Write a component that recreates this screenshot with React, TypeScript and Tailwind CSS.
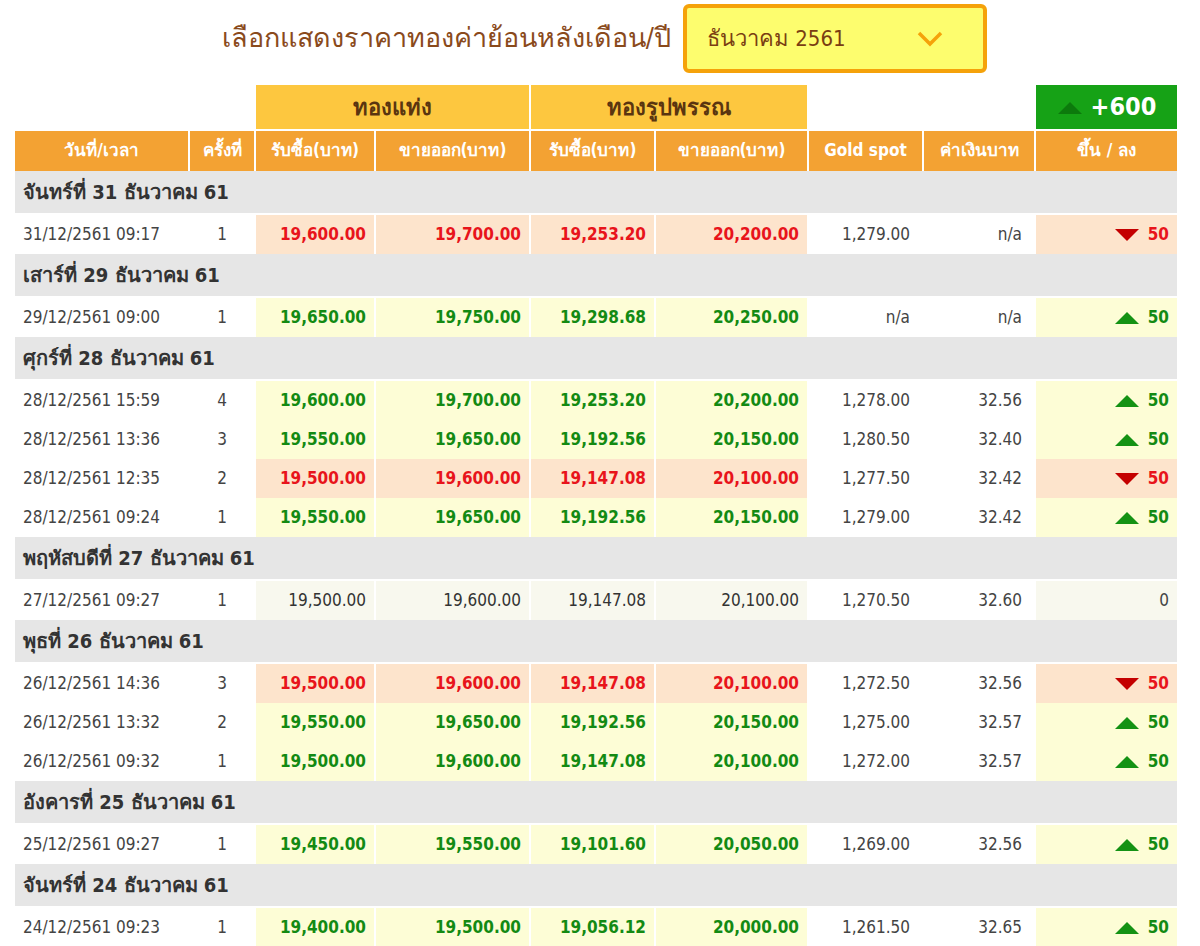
import React from 'react';

type Row = { t: string; n: number; v: string[]; spot: string; fx: string; dir: 'up' | 'down' | 'eq' };
type Day = { label: string; rows: Row[] };

const days: Day[] = [
  { label: 'จันทร์ที่ 31 ธันวาคม 61', rows: [
    { t: '31/12/2561 09:17', n: 1, v: ['19,600.00', '19,700.00', '19,253.20', '20,200.00'], spot: '1,279.00', fx: 'n/a', dir: 'down' },
  ] },
  { label: 'เสาร์ที่ 29 ธันวาคม 61', rows: [
    { t: '29/12/2561 09:00', n: 1, v: ['19,650.00', '19,750.00', '19,298.68', '20,250.00'], spot: 'n/a', fx: 'n/a', dir: 'up' },
  ] },
  { label: 'ศุกร์ที่ 28 ธันวาคม 61', rows: [
    { t: '28/12/2561 15:59', n: 4, v: ['19,600.00', '19,700.00', '19,253.20', '20,200.00'], spot: '1,278.00', fx: '32.56', dir: 'up' },
    { t: '28/12/2561 13:36', n: 3, v: ['19,550.00', '19,650.00', '19,192.56', '20,150.00'], spot: '1,280.50', fx: '32.40', dir: 'up' },
    { t: '28/12/2561 12:35', n: 2, v: ['19,500.00', '19,600.00', '19,147.08', '20,100.00'], spot: '1,277.50', fx: '32.42', dir: 'down' },
    { t: '28/12/2561 09:24', n: 1, v: ['19,550.00', '19,650.00', '19,192.56', '20,150.00'], spot: '1,279.00', fx: '32.42', dir: 'up' },
  ] },
  { label: 'พฤหัสบดีที่ 27 ธันวาคม 61', rows: [
    { t: '27/12/2561 09:27', n: 1, v: ['19,500.00', '19,600.00', '19,147.08', '20,100.00'], spot: '1,270.50', fx: '32.60', dir: 'eq' },
  ] },
  { label: 'พุธที่ 26 ธันวาคม 61', rows: [
    { t: '26/12/2561 14:36', n: 3, v: ['19,500.00', '19,600.00', '19,147.08', '20,100.00'], spot: '1,272.50', fx: '32.56', dir: 'down' },
    { t: '26/12/2561 13:32', n: 2, v: ['19,550.00', '19,650.00', '19,192.56', '20,150.00'], spot: '1,275.00', fx: '32.57', dir: 'up' },
    { t: '26/12/2561 09:32', n: 1, v: ['19,500.00', '19,600.00', '19,147.08', '20,100.00'], spot: '1,272.00', fx: '32.57', dir: 'up' },
  ] },
  { label: 'อังคารที่ 25 ธันวาคม 61', rows: [
    { t: '25/12/2561 09:27', n: 1, v: ['19,450.00', '19,550.00', '19,101.60', '20,050.00'], spot: '1,269.00', fx: '32.56', dir: 'up' },
  ] },
  { label: 'จันทร์ที่ 24 ธันวาคม 61', rows: [
    { t: '24/12/2561 09:23', n: 1, v: ['19,400.00', '19,500.00', '19,056.12', '20,000.00'], spot: '1,261.50', fx: '32.65', dir: 'up' },
  ] },
];

const widths = ['w-[173px]', 'w-[64px]', 'w-[118px]', 'w-[153px]', 'w-[123px]', 'w-[151px]', 'w-[113px]', 'w-[110px]', 'w-[141px]'];

const Tri: React.FC<{ up: boolean; cls: string }> = ({ up, cls }) => (
  <svg width="26" height="14" viewBox="0 0 26 14" className={`inline-block mr-2 ${cls}`}>
    <path d={up ? 'M13 1 L25 13 L1 13 Z' : 'M1 1 L25 1 L13 13 Z'} fill="currentColor" />
  </svg>
);

const DataRow: React.FC<{ r: Row }> = ({ r }) => {
  const bg = r.dir === 'down' ? 'bg-[#fde4cc]' : r.dir === 'up' ? 'bg-[#fdfdd6]' : 'bg-[#f8f8ee]';
  const tc = r.dir === 'down' ? 'text-[#e8141b] font-bold' : r.dir === 'up' ? 'text-[#138a13] font-bold' : 'text-[#333]';
  return (
    <tr className="h-[39px] text-[17px] text-[#444]">
      <td className="pl-2 bg-white">{r.t}</td>
      <td className="text-center bg-white">{r.n}</td>
      {r.v.map((x, i) => (
        <td key={i} className={`text-right pr-2 ${bg} ${tc}`}>{x}</td>
      ))}
      <td className="text-right pr-3 bg-white">{r.spot}</td>
      <td className="text-right pr-3 bg-white">{r.fx}</td>
      <td className={`text-right pr-2 ${bg}`}>
        {r.dir === 'eq' ? <span>0</span> : (
          <span className={r.dir === 'up' ? 'text-[#138a13] font-bold' : 'text-[#e8141b] font-bold'}>
            <Tri up={r.dir === 'up'} cls={r.dir === 'up' ? 'text-[#149214]' : 'text-[#c40000]'} />50
          </span>
        )}
      </td>
    </tr>
  );
};

export default function App() {
  return (
    <div className="w-[1200px] h-[946px] bg-white overflow-hidden" style={{ fontFamily: '"DejaVu Sans Condensed", "Liberation Sans", "Noto Sans", sans-serif' }}>
      <div className="flex items-center justify-end pr-[213px] pt-[4px] gap-3">
        <span className="text-[27px] text-[#8a4a1c]">เลือกแสดงราคาทองค่าย้อนหลังเดือน/ปี</span>
        <div className="w-[304px] h-[69px] border-[4px] border-[#f5a20a] rounded-md bg-[#fdfd6e] flex items-center justify-between pl-5 pr-10">
          <span className="text-[22px] text-[#7a3e12]">ธันวาคม 2561</span>
          <svg width="26" height="16" viewBox="0 0 26 16"><path d="M2 2 L13 13 L24 2" fill="none" stroke="#f5a20a" strokeWidth="3.5" /></svg>
        </div>
      </div>
      <table className="ml-[13px] mt-[12px] border-separate border-spacing-x-[2px] border-spacing-y-0 table-fixed">
        <colgroup>{widths.map((w, i) => <col key={i} className={w} />)}</colgroup>
        <thead>
          <tr className="h-[44px]">
            <th colSpan={2}></th>
            <th colSpan={2} className="bg-[#fdc73f] text-[#5a3510] text-[22px] font-bold">ทองแท่ง</th>
            <th colSpan={2} className="bg-[#fdc73f] text-[#5a3510] text-[22px] font-bold">ทองรูปพรรณ</th>
            <th colSpan={2}></th>
            <th className="bg-[#16a216] text-white text-[25px] font-bold">
              <Tri up cls="text-[#0c7a0c]" />+600
            </th>
          </tr>
          <tr className="h-[42px] bg-[#f3a233] text-white text-[17px] font-bold">
            <th className="border-t-2 border-white">วันที่/เวลา</th>
            <th className="border-t-2 border-white">ครั้งที่</th>
            <th className="border-t-2 border-white">รับซื้อ(บาท)</th>
            <th className="border-t-2 border-white">ขายออก(บาท)</th>
            <th className="border-t-2 border-white">รับซื้อ(บาท)</th>
            <th className="border-t-2 border-white">ขายออก(บาท)</th>
            <th className="border-t-2 border-white">Gold spot</th>
            <th className="border-t-2 border-white">ค่าเงินบาท</th>
            <th className="border-t-2 border-white">ขึ้น / ลง</th>
          </tr>
        </thead>
        <tbody>
          {days.map((d) => (
            <React.Fragment key={d.label}>
              <tr className="h-[44px]">
                <td colSpan={9} className="bg-[#e6e6e6] pl-2 text-[20px] font-bold text-[#333] border-b-2 border-white">{d.label}</td>
              </tr>
              {d.rows.map((r) => <DataRow key={r.t} r={r} />)}
            </React.Fragment>
          ))}
        </tbody>
      </table>
    </div>
  );
}
